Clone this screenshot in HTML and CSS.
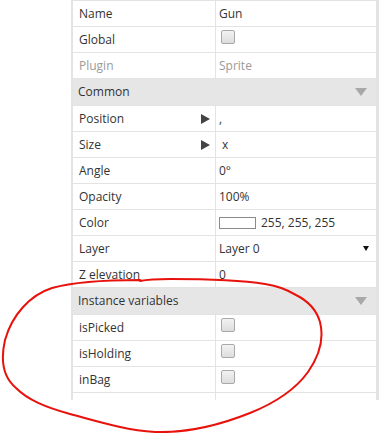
FILE: index.html
```html
<!DOCTYPE html>
<html lang="en">
<head>
  <meta charset="UTF-8">
  <title>Properties</title>
  <link rel="stylesheet" href="styles.css">
</head>
<body>
  <div class="panel">
    <div class="props">
      <div class="row"><div class="key">Name</div><div class="val">Gun</div></div>
      <div class="row"><div class="key">Global</div><div class="val"><span class="check"></span></div></div>
      <div class="row muted"><div class="key">Plugin</div><div class="val">Sprite</div></div>
      <div class="row section"><span>Common</span><span class="fold"></span></div>
      <div class="row"><div class="key">Position <span class="expand"></span></div><div class="val">,</div></div>
      <div class="row"><div class="key">Size <span class="expand"></span></div><div class="val">&nbsp;x</div></div>
      <div class="row"><div class="key">Angle</div><div class="val">0°</div></div>
      <div class="row"><div class="key">Opacity</div><div class="val">100%</div></div>
      <div class="row"><div class="key">Color</div><div class="val"><span class="swatch"></span>255, 255, 255</div></div>
      <div class="row"><div class="key">Layer</div><div class="val select">Layer 0 <span class="drop"></span></div></div>
      <div class="row"><div class="key">Z elevation</div><div class="val">0</div></div>
      <div class="row section"><span>Instance variables</span><span class="fold"></span></div>
      <div class="row"><div class="key">isPicked</div><div class="val"><span class="check"></span></div></div>
      <div class="row"><div class="key">isHolding</div><div class="val"><span class="check"></span></div></div>
      <div class="row"><div class="key">inBag</div><div class="val"><span class="check"></span></div></div>
      <div class="row"><div class="key"></div><div class="val"></div></div>
    </div>
  </div>

  <!-- red marker loop drawn over the screenshot -->
  <svg class="scribble" width="379" height="433" viewBox="0 0 379 433">
    <path d="M 140 280 C 100 280 70 283 52 288 C 30 295 12 315 5 340 C 0 362 4 378 16 388 C 28 400 45 407 70 414 C 100 422 125 430 155 432 C 185 433 215 427 250 413 C 275 403 295 390 308 372 C 320 355 324 338 320 322 C 316 308 306 300 296 295 C 285 289 278 286 265 284 C 240 280 200 279 170 279 C 155 279 145 280 140 281"/>
  </svg>
</body>
</html>
```

FILE: styles.css
```css
body {
  margin: 0;
  background-color: #ffffff;
  font-family: 'Open Sans', 'Noto Sans', sans-serif;
  font-size: 12px;
  color: #333333;
  position: relative;
  height: 433px;
  overflow: hidden;
}

.panel {
  margin-left: 71px;
  width: 303px;
  height: 400px;
  border-left: 2px solid #e3e3e3;
  border-right: 3px solid #e3e3e3;
  overflow: hidden;
}

.props {
  border-top: 1px solid #e3e3e3;
}

.row {
  display: grid;
  grid-template-columns: 143px 1fr;
  height: 25px;
  border-bottom: 1px solid #e3e3e3;
  line-height: 25px;
}

.key {
  border-right: 1px solid #e3e3e3;
  padding-left: 6px;
  padding-right: 5px;
  display: flex;
  align-items: center;
  justify-content: space-between;
}

.val {
  padding-left: 3px;
  display: flex;
  align-items: center;
  white-space: pre;
}

.muted {
  color: #9a9a9a;
}

.section {
  display: flex;
  align-items: center;
  justify-content: space-between;
  height: 26px;
  line-height: 26px;
  background-color: #e6e6e6;
  padding-left: 5px;
  padding-right: 9px;
}

.fold {
  width: 0;
  height: 0;
  border-left: 6px solid transparent;
  border-right: 6px solid transparent;
  border-top: 8px solid #a8a8a8;
}

.expand {
  width: 0;
  height: 0;
  border-top: 5px solid transparent;
  border-bottom: 5px solid transparent;
  border-left: 9px solid #444444;
}

.check {
  display: block;
  width: 12px;
  height: 12px;
  margin-left: 2px;
  margin-top: -6px;
  border: 1px solid #a9a9a9;
  border-radius: 2px;
  background: linear-gradient(#f2f2f2, #dddddd);
}

.swatch {
  display: inline-block;
  width: 35px;
  height: 10px;
  border: 1px solid #8a8a8a;
  background-color: #ffffff;
  margin-right: 5px;
}

.select {
  justify-content: space-between;
  padding-right: 7px;
}

.drop {
  width: 0;
  height: 0;
  border-left: 3px solid transparent;
  border-right: 3px solid transparent;
  border-top: 5px solid #111111;
}

.scribble {
  position: absolute;
  top: 0;
  left: 0;
  pointer-events: none;
}

.scribble path {
  fill: none;
  stroke: #e8120c;
  stroke-width: 2;
  stroke-linecap: round;
}
```
